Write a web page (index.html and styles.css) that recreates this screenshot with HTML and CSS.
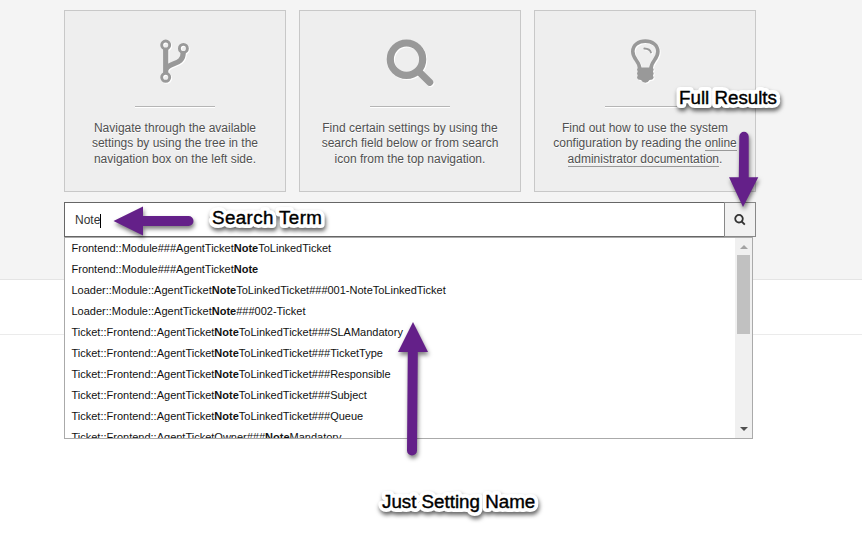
FILE: index.html
```html
<!DOCTYPE html>
<html lang="en">
<head>
<meta charset="utf-8">
<title>System Configuration</title>
<link rel="stylesheet" href="styles.css">
</head>
<body>
<main class="hero">
  <div class="cards">
    <section class="card">
      <svg class="icon" viewBox="0 0 60 50"><path d="M20.7 13V37M38.2 16C38.7 29.5 24 26 21 33.500" stroke-width="5.200"/><g stroke-width="2.900"><circle cx="20.700" cy="9" r="4"/><circle cx="20.700" cy="41.300" r="4"/><circle cx="38.400" cy="12.400" r="4"/></g></svg>
      <p>Navigate through the available<br>settings by using the tree in the<br>navigation box on the left side.</p>
    </section>
    <section class="card">
      <svg class="icon" viewBox="0 0 60 50"><circle cx="26.500" cy="23.200" r="16.200" stroke-width="7.200"/><path d="M38.500 35.200L49.700 46.300" stroke-width="7.200" stroke-linecap="round"/></svg>
      <p>Find certain settings by using the<br>search field below or from search<br>icon from the top navigation.</p>
    </section>
    <section class="card">
      <svg class="icon" viewBox="0 0 60 50"><path d="M24.800 33C24.800 25 17.800 23.500 17.800 15.500C17.800 9 23.500 5.100 30.300 5.100S42.900 9 42.900 15.500C42.900 23.500 35.900 25 35.900 33" stroke-width="3.600"/><path d="M29.300 12.500Q35 12.700 36 16.500" stroke-width="1.800" stroke-linecap="round"/><path class="solid" d="M23 31.500H37.800L38.700 33.500L38 35.500L38.700 37.500L38 39.500L38.700 41.500Q38 44 34.500 44Q33 46.700 30.300 46.700T26 44Q22.500 44 22 41.500L22.700 39.500L22 37.500L22.700 35.500L22 33.500Z"/></svg>
      <p>Find out how to use the system<br>configuration by reading the <a>online</a><br><a>administrator documentation</a>.</p>
    </section>
  </div>
  <div class="search">
    <div class="field"><span>Note</span><i class="caret"></i></div>
    <div class="button"><svg viewBox="0 0 12 12"><circle cx="5" cy="4.700" r="3.800"/><path d="M7.700 7.500L10.800 10.600"/></svg></div>
    <div class="dropdown">
      <ul>
        <li>Frontend::Module###AgentTicket<b>Note</b>ToLinkedTicket</li>
        <li>Frontend::Module###AgentTicket<b>Note</b></li>
        <li>Loader::Module::AgentTicket<b>Note</b>ToLinkedTicket###001-NoteToLinkedTicket</li>
        <li>Loader::Module::AgentTicket<b>Note</b>###002-Ticket</li>
        <li>Ticket::Frontend::AgentTicket<b>Note</b>ToLinkedTicket###SLAMandatory</li>
        <li>Ticket::Frontend::AgentTicket<b>Note</b>ToLinkedTicket###TicketType</li>
        <li>Ticket::Frontend::AgentTicket<b>Note</b>ToLinkedTicket###Responsible</li>
        <li>Ticket::Frontend::AgentTicket<b>Note</b>ToLinkedTicket###Subject</li>
        <li>Ticket::Frontend::AgentTicket<b>Note</b>ToLinkedTicket###Queue</li>
        <li>Ticket::Frontend::AgentTicketOwner###<b>Note</b>Mandatory</li>
      </ul>
      <div class="scrollbar"><i class="up"></i><i class="thumb"></i><i class="down"></i></div>
    </div>
  </div>
</main>
<div class="strip"></div>
<svg class="notes" viewBox="0 0 862 534">
  <g class="arrow">
    <path d="M113.500 221L143 206.500V216H188.500A5 5 0 0 1 188.500 226H143V235.500Z"/>
    <path d="M743 207L729 177.300H738.800L739.300 136.500A4.700 4.700 0 0 1 748.700 136.500V177.300H758.300Z"/>
    <path d="M413 322L428 352H417.800L417 450.500A4.900 4.900 0 0 1 407 450.500L407.800 352H398Z"/>
  </g>
  <g class="halo"><use href="#labels"/></g>
  <g class="ink">
    <g id="labels">
      <text x="679" y="103.500">Full Results</text>
      <text x="212" y="223.500" class="wide">Search Term</text>
      <text x="382" y="507.500">Just Setting Name</text>
    </g>
  </g>
</svg>
</body>
</html>
```
FILE: styles.css
```css
* { box-sizing: border-box; }
body {
  margin: 0;
  height: 534px;
  position: relative;
  overflow: hidden;
  background: #fff;
  color: #505050;
  font: 12px/15.6px "Liberation Sans", Arial, sans-serif;
}
.hero {
  height: 280px;
  padding: 10px 106px 0 64px;
  background: #f4f4f4;
  border-bottom: 1px solid #e4e4e4;
}
.strip { height: 55px; border-bottom: 1px solid #ebebeb; }
.cards { display: grid; grid-template-columns: repeat(3, 222px); gap: 13px; }
.card {
  height: 182px;
  padding-top: 25px;
  display: flex;
  flex-direction: column;
  align-items: center;
  border: 1px solid #c8c8c8;
  background: #eee;
  text-align: center;
  text-shadow: 0 1px 0 #fff;
}
.icon {
  width: 60px;
  height: 50px;
  fill: none;
  stroke: #999;
  filter: drop-shadow(1px 1px 0 #fff);
}
.solid { fill: #999; stroke: none; }
.card p { margin: 0; white-space: nowrap; }
.card p::before {
  content: "";
  display: block;
  width: 80px;
  height: 1px;
  margin: 20px auto 13.6px;
  background: #b5b5b5;
  box-shadow: 0 1px 0 #fff;
}
.card a { border-bottom: 1px solid #999; }
.search {
  position: relative;
  display: flex;
  width: 692px;
  height: 35px;
  margin-top: 10px;
}
.field {
  flex: 1;
  display: flex;
  align-items: center;
  padding: 2px 0 0 10px;
  border: 1px solid #666;
  border-right: 0;
  background: #fff;
  color: #333;
}
.caret { width: 1px; height: 14px; background: #000; }
.button {
  width: 32px;
  display: grid;
  place-items: center;
  border: 1px solid #888;
  background: #f1f1f1;
}
.button svg { width: 12px; height: 12px; fill: none; stroke: #333; stroke-width: 1.8; }
.dropdown {
  position: absolute;
  left: 0;
  top: 35px;
  width: 689px;
  height: 202px;
  display: flex;
  overflow: hidden;
  border: 1px solid #aaa;
  background: #fff;
}
.dropdown ul { flex: 1; margin: 0; padding: 0 0 0 6.500px; list-style: none; }
.dropdown li { height: 21px; font-size: 11px; line-height: 21px; color: #111; white-space: nowrap; }
.scrollbar {
  width: 17px;
  display: flex;
  flex-direction: column;
  align-items: center;
  background: #f0f0f0;
}
.up, .down { border: 4px solid transparent; border-top: 0; border-bottom: 4px solid #a3a3a3; margin-top: 7px; }
.thumb { width: 13px; height: 79px; margin-top: 6px; background: #c1c1c1; }
.down { border-top: 4px solid #505050; border-bottom: 0; margin: auto 0 7px; }
.notes { position: absolute; left: 0; top: 0; width: 862px; height: 534px; pointer-events: none; font-size: 18.75px; }
.arrow { fill: #642089; filter: drop-shadow(1px 3px 2px rgba(0, 0, 0, .5)); }
.halo {
  fill: #fff;
  stroke: #fff;
  stroke-width: 8px;
  stroke-linejoin: round;
  filter: drop-shadow(1px 3px 2px rgba(0, 0, 0, .6));
}
.ink { fill: #000; stroke: #000; stroke-width: .4px; }
/* The halo repeats the labels through <use>, so fill and stroke are inherited there. */
.wide { letter-spacing: .4px; }
```
